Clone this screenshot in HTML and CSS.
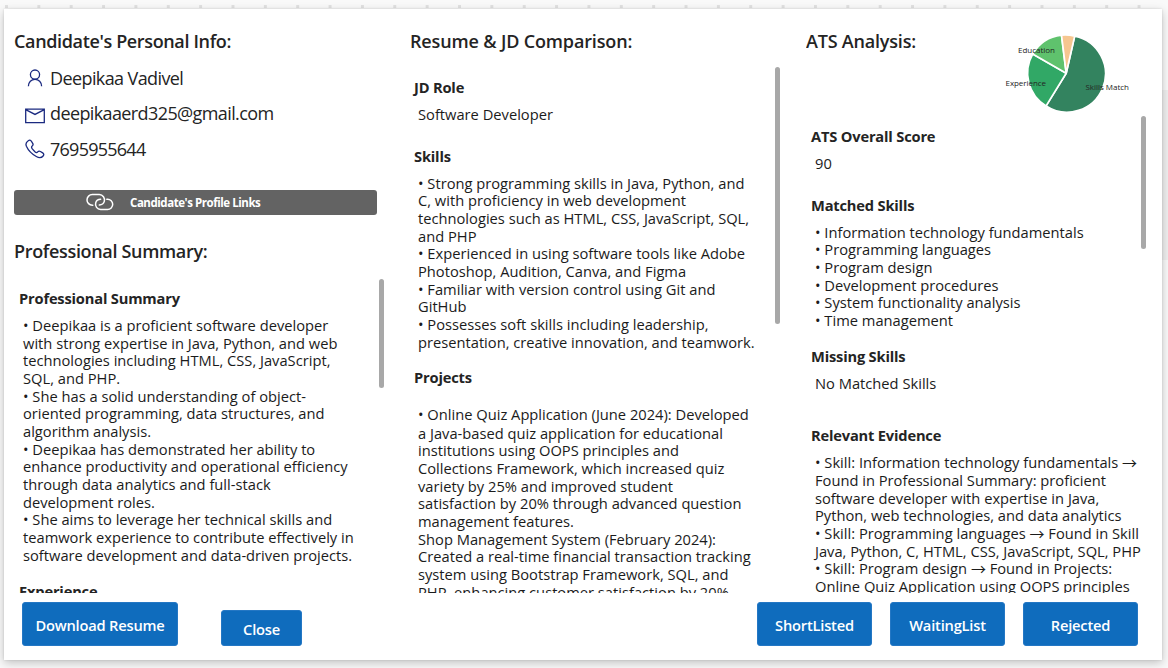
FILE: index.html
```html
<!DOCTYPE html>
<html lang="en">
<head>
<meta charset="utf-8">
<title>Candidate Details</title>
<link rel="stylesheet" href="styles.css">
</head>
<body>
<main class="card">
  <div class="columns">
    <section class="col col-info">
      <h2 class="title t-info">Candidate's Personal Info:</h2>
      <ul class="contact">
        <li>
          <svg class="icon" width="20" height="20" viewBox="0 0 20 20"><circle cx="10" cy="6.6" r="4.6"/><path d="M3.4 18.2c0-4 2.9-6.9 6.6-6.9s6.6 2.9 6.6 6.9"/></svg>
          <span class="c-name">Deepikaa Vadivel</span>
        </li>
        <li>
          <svg class="icon icon-mail" width="20" height="20" viewBox="0 0 20 20"><path d="M.7 4.100h18.600v13.600H.7zM.7 4.600 10 9.400l9.300-4.800"/></svg>
          <span class="c-mail">deepikaaerd325@gmail.com</span>
        </li>
        <li>
          <svg class="icon" width="20" height="20" viewBox="0 0 20 20"><path d="M3.200 1.700C4.500.7 5.500.9 6.300 2.100l1.400 2.200c.7 1.200.5 2-.5 2.800-1 .8-.9 1.500.1 2.800l2.600 2.800c1.200 1.100 2 1.200 2.800.2.800-.9 1.600-1.100 2.700-.4l2.300 1.400c1.300.9 1.400 1.900.4 3.100-1.700 2-4.200 2-6.800.5-4.600-2.500-8-6-9.900-10.200C.4 4.900 1.100 3.100 3.200 1.700z"/></svg>
          <span class="c-phone">7695955644</span>
        </li>
      </ul>
      <div class="links">
        <svg class="link-icon" width="28" height="18" viewBox="0 0 28 18"><path d="M6.800 12.200H6.300a5.300 5.300 0 0 1 0-10.600h7a5.300 5.300 0 0 1 5 6.800c-.6 2.100-2.600 3.500-5 3.500"/><path d="M20.800 6.200h.8a5.100 5.100 0 0 1 0 10.200h-7a5.100 5.100 0 0 1-4.900-6.500c.6-2.200 2.600-3.600 4.900-3.600"/></svg>
        <span>Candidate's Profile Links</span>
      </div>
      <h2 class="title t-summary">Professional Summary:</h2>
      <div class="panel panel-summary">
        <div class="text">
          <h3 class="h-ps">Professional Summary</h3>
          <p>• Deepikaa is a proficient software developer<br>with strong expertise in Java, Python, and web<br>technologies including HTML, CSS, JavaScript,<br>SQL, and PHP.<br>• She has a solid understanding of object-<br>oriented programming, data structures, and<br>algorithm analysis.<br>• Deepikaa has demonstrated her ability to<br>enhance productivity and operational efficiency<br>through data analytics and full-stack<br>development roles.<br>• She aims to leverage her technical skills and<br>teamwork experience to contribute effectively in<br>software development and data-driven projects.</p>
          <h3 class="h-exp">Experience</h3>
        </div>
        <i class="thumb thumb-summary"></i>
      </div>
    </section>

    <section class="col col-jd">
      <h2 class="title t-jd">Resume &amp; JD Comparison:</h2>
      <div class="panel panel-jd">
        <div class="text">
          <h3>JD Role</h3>
          <p>Software Developer</p>
          <h3 class="gap">Skills</h3>
          <p>• Strong programming skills in Java, Python, and<br>C, with proficiency in web development<br>technologies such as HTML, CSS, JavaScript, SQL,<br>and PHP<br>• Experienced in using software tools like Adobe<br>Photoshop, Audition, Canva, and Figma<br>• Familiar with version control using Git and<br>GitHub<br>• Possesses soft skills including leadership,<br>presentation, creative innovation, and teamwork.</p>
          <h3 class="h-projects">Projects</h3>
          <p class="first-line">• Online Quiz Application (June 2024): Developed</p>
          <p>a Java-based quiz application for educational<br>institutions using OOPS principles and<br>Collections Framework, which increased quiz<br>variety by 25% and improved student<br>satisfaction by 20% through advanced question<br>management features.<br>Shop Management System (February 2024):<br>Created a real-time financial transaction tracking<br>system using Bootstrap Framework, SQL, and<br>PHP, enhancing customer satisfaction by 20%</p>
        </div>
        <i class="thumb thumb-jd"></i>
      </div>
    </section>

    <section class="col col-ats">
      <header class="ats-head">
        <h2 class="title t-ats">ATS Analysis:</h2>
        <svg class="pie" width="130" height="84" viewBox="1003 31 130 84">
          <g stroke="#fff" stroke-width="1.700" stroke-linejoin="round">
            <path fill="#33835f" d="M1066.200 73.200 1074.700 36.100A38.400 38.400 0 1 1 1046.100 105.900z"/>
            <path fill="#31a866" d="M1066.200 73.200 1046.100 105.900A38.400 38.400 0 0 1 1032.700 54z"/>
            <path fill="#5fc26d" d="M1066.200 73.200 1032.700 54A38.400 38.400 0 0 1 1061.500 35.100z"/>
            <path fill="#f6c690" d="M1066.200 73.200 1061.500 35.100A38.400 38.400 0 0 1 1074.700 36.100z"/>
          </g>
          <g class="pie-labels">
            <text x="1018" y="53" textLength="37">Education</text>
            <text x="1005.500" y="86" textLength="40.500">Experience</text>
            <text x="1085.500" y="90" textLength="43.500">Skills Match</text>
          </g>
        </svg>
      </header>
      <div class="panel panel-ats">
        <div class="text">
          <h3 class="h-score">ATS Overall Score</h3>
          <p>90</p>
          <h3 class="gap">Matched Skills</h3>
          <p>• Information technology fundamentals<br>• Programming languages<br>• Program design<br>• Development procedures<br>• System functionality analysis<br>• Time management</p>
          <h3 class="h-missing">Missing Skills</h3>
          <p>No Matched Skills</p>
          <h3 class="h-evidence">Relevant Evidence</h3>
          <p>• Skill: Information technology fundamentals <span class="arrow">→</span><br>Found in Professional Summary: proficient<br>software developer with expertise in Java,<br>Python, web technologies, and data analytics<br>• Skill: Programming languages <span class="arrow">→</span> Found in Skill<br>Java, Python, C, HTML, CSS, JavaScript, SQL, PHP<br>• Skill: Program design <span class="arrow">→</span> Found in Projects:<br>Online Quiz Application using OOPS principles</p>
        </div>
        <i class="thumb thumb-ats"></i>
      </div>
    </section>
  </div>

  <footer class="actions">
    <button class="btn btn-download">Download Resume</button>
    <button class="btn btn-close">Close</button>
    <div class="decision">
      <button class="btn">ShortListed</button>
      <button class="btn">WaitingList</button>
      <button class="btn">Rejected</button>
    </div>
  </footer>
</main>
</body>
</html>
```
FILE: styles.css
```css
* { box-sizing: border-box; margin: 0; padding: 0; }

body {
  width: 1168px;
  height: 668px;
  overflow: hidden;
  padding: 9px 6px 8px 4px;
  font-family: "Open Sans", "Noto Sans", sans-serif;
  color: #242424;
  background:
    linear-gradient(#efefef, #efefef) 1162px 90px / 6px 170px no-repeat,
    linear-gradient(90deg, #e1e1e1 3px, transparent 3px) 5px 5px / 32.36px 3px repeat-x,
    #f9f9f9;
}

.card {
  display: flex;
  flex-direction: column;
  height: 651px;
  background: #fff;
  box-shadow: 0 3px 9px rgba(0, 0, 0, .22), 0 0 2px rgba(0, 0, 0, .12);
}

.columns {
  display: grid;
  grid-template-columns: 371px 371px 340px;
  column-gap: 25px;
  height: 584px;
  padding-left: 10px;
}

.col { display: flex; flex-direction: column; height: 584px; overflow: hidden; padding-top: 20px; }

.title { font-size: 18px; line-height: 24px; font-weight: 600; white-space: nowrap; }
.t-info { letter-spacing: -.36px; }
.t-summary { margin-top: 24px; letter-spacing: -.33px; }
.t-jd { letter-spacing: -.15px; }
.t-ats { letter-spacing: -.2px; }

.contact { list-style: none; margin: 7px 0 0 11px; }
.contact li { display: flex; align-items: center; gap: 5px; height: 35.500px; font-size: 18px; white-space: nowrap; }
.icon { fill: none; stroke: #1b2a80; stroke-width: 1.300; flex: none; }
.icon-mail { margin-top: 4px; }
.c-name { letter-spacing: -.6px; }
.c-mail { letter-spacing: -.61px; }
.c-phone { letter-spacing: -.75px; }

.links {
  display: flex;
  align-items: center;
  width: 363px;
  height: 25px;
  margin-top: 23px;
  padding-left: 72px;
  gap: 16px;
  border-radius: 3px;
  background: #636363;
  color: #fff;
  font-size: 11.500px;
  font-weight: 700;
  letter-spacing: -.45px;
  white-space: nowrap;
}
.link-icon { fill: none; stroke: #fff; stroke-width: 1.500; stroke-linecap: round; }

.panel { display: flex; justify-content: space-between; flex: 1; min-height: 0; overflow: hidden; }
.text { padding-left: 4px; white-space: nowrap; }
.text h3 { font-size: 14.670px; line-height: 20px; font-weight: 700; letter-spacing: -.18px; }
.text p { margin: 9px 0 0 4px; font-size: 14.700px; line-height: 17.670px; color: #1b1b1b; }
.text .gap { margin-top: 22px; }
.thumb { width: 5px; border-radius: 3px; background: #a8a8a8; flex: none; }

.panel-summary { margin-top: 16px; margin-right: 1px; }
.panel-summary .text { padding: 9px 0 0 5px; }
.panel-summary .text p { margin-top: 9.600px; }
.thumb-summary { height: 109px; }
.text .h-exp { margin-top: 16px; }

.panel-jd { margin-top: 14px; margin-right: 1px; }
.panel-jd .text { padding-top: 10px; }
.thumb-jd { height: 257px; }
.text .h-projects { margin-top: 16px; }
.text .first-line { margin-top: 19px; }
.text .first-line + p { margin-top: .500px; }

.ats-head { display: flex; justify-content: space-between; height: 86px; padding-right: 13px; }
.pie { flex: none; margin-top: 2px; }
.pie-labels { font-size: 8px; fill: #242424; }
.panel-ats .text { padding: 11px 0 0 5px; }
.thumb-ats { height: 133px; margin-top: 1px; }
.text .h-missing { margin-top: 16px; }
.text .h-evidence { margin-top: 33px; }
.arrow { display: inline-block; width: 15px; font: 15px/10px "Noto Sans CJK SC", sans-serif; transform: translateY(1px); }

.actions { display: flex; align-items: flex-end; height: 53px; padding: 0 24px 0 18px; }
.btn {
  width: 115px;
  height: 44px;
  padding-top: 2px;
  border: 1px solid #2477c4;
  border-radius: 3px;
  background: #0f6cbd;
  color: #fff;
  font: 600 14.670px "Open Sans", sans-serif;
  letter-spacing: -.2px;
  white-space: nowrap;
}
.btn-download { width: 156px; }
.btn-close { width: 81px; height: 36px; margin-left: 43px; }
.decision { display: flex; gap: 18px; margin-left: auto; }
```
